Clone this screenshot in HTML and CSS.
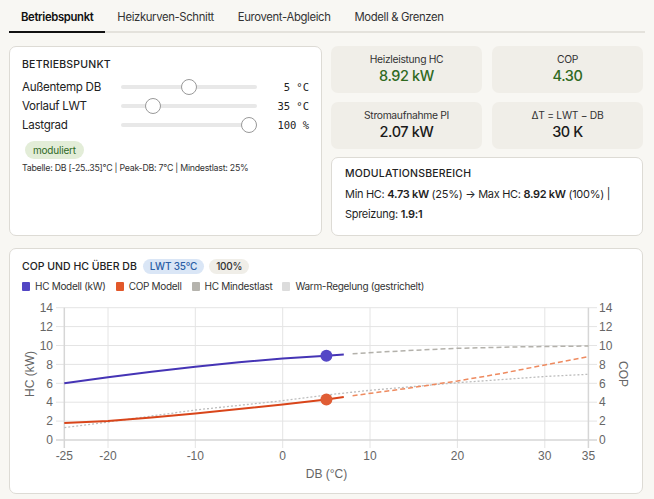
FILE: index.html
```html
<!doctype html>
<html lang="de">
  <head>
    <meta charset="UTF-8" />
    <meta name="viewport" content="width=device-width, initial-scale=1.0" />
    <title>Betriebspunkt</title>
    <link rel="stylesheet" href="styles.css">
  </head>
  <body>
    <div class="app">
      <nav class="tabs">
        <div class="tab active">Betriebspunkt</div>
        <div class="tab">Heizkurven-Schnitt</div>
        <div class="tab">Eurovent-Abgleich</div>
        <div class="tab">Modell &amp; Grenzen</div>
      </nav>

      <div class="top-row">
        <div class="card op-card">
          <div class="card-title">Betriebspunkt</div>
          <div class="slider-row">
            <span class="slider-label">Außentemp DB</span>
            <div class="slider"><span class="thumb" style="left: 68px"></span></div>
            <span class="slider-value">5 °C</span>
          </div>
          <div class="slider-row">
            <span class="slider-label">Vorlauf LWT</span>
            <div class="slider"><span class="thumb" style="left: 32px"></span></div>
            <span class="slider-value">35 °C</span>
          </div>
          <div class="slider-row">
            <span class="slider-label">Lastgrad</span>
            <div class="slider"><span class="thumb" style="left: 128px"></span></div>
            <span class="slider-value">100 %</span>
          </div>
          <div class="pill pill-green">moduliert</div>
          <div class="note">Tabelle: DB [-25..35]°C | Peak-DB: 7°C | Mindestlast: 25%</div>
        </div>

        <div class="right-col">
          <div class="metrics">
            <div class="metric">
              <div class="metric-label">Heizleistung HC</div>
              <div class="metric-value green">8.92 kW</div>
            </div>
            <div class="metric">
              <div class="metric-label">COP</div>
              <div class="metric-value green">4.30</div>
            </div>
            <div class="metric">
              <div class="metric-label">Stromaufnahme PI</div>
              <div class="metric-value">2.07 kW</div>
            </div>
            <div class="metric">
              <div class="metric-label">ΔT = LWT − DB</div>
              <div class="metric-value">30 K</div>
            </div>
          </div>
          <div class="card mod-card">
            <div class="card-title">Modulationsbereich</div>
            <p class="mod-text">Min HC: <b>4.73 kW</b> (25%) → Max HC: <b>8.92 kW</b> (100%) |<br>Spreizung: <b>1.9:1</b></p>
          </div>
        </div>
      </div>

      <div class="card chart-card">
        <div class="chart-head">
          <span class="card-title">COP und HC über DB</span>
          <span class="pill pill-blue">LWT 35°C</span>
          <span class="pill pill-grey">100%</span>
        </div>
        <div class="legend">
          <span class="legend-item"><i class="swatch sw-blue"></i>HC Modell (kW)</span>
          <span class="legend-item"><i class="swatch sw-orange"></i>COP Modell</span>
          <span class="legend-item"><i class="swatch sw-grey"></i>HC Mindestlast</span>
          <span class="legend-item"><i class="swatch sw-light"></i>Warm-Regelung (gestrichelt)</span>
        </div>

        <svg class="chart" width="608" height="186" viewBox="22 296 608 186">
          <!-- grid -->
          <g stroke="#e4e4e4" stroke-width="1">
            <line x1="56" y1="307.7" x2="597" y2="307.7" />
            <line x1="56" y1="326.6" x2="597" y2="326.6" />
            <line x1="56" y1="345.5" x2="597" y2="345.5" />
            <line x1="56" y1="364.4" x2="597" y2="364.4" />
            <line x1="56" y1="383.3" x2="597" y2="383.3" />
            <line x1="56" y1="402.2" x2="597" y2="402.2" />
            <line x1="56" y1="421.1" x2="597" y2="421.1" />
            <line x1="108" y1="307.7" x2="108" y2="448" />
            <line x1="195.3" y1="307.7" x2="195.3" y2="448" />
            <line x1="282.7" y1="307.7" x2="282.7" y2="448" />
            <line x1="370" y1="307.7" x2="370" y2="448" />
            <line x1="457.4" y1="307.7" x2="457.4" y2="448" />
            <line x1="544.8" y1="307.7" x2="544.8" y2="448" />
          </g>
          <g stroke="#d6d6d6" stroke-width="1.5">
            <line x1="56" y1="440" x2="597" y2="440" />
            <line x1="64.3" y1="307.7" x2="64.3" y2="448" />
            <line x1="588.4" y1="307.7" x2="588.4" y2="448" />
          </g>

          <!-- axis labels -->
          <g class="tick" text-anchor="end">
            <text x="53" y="312">14</text>
            <text x="53" y="331">12</text>
            <text x="53" y="350">10</text>
            <text x="53" y="369">8</text>
            <text x="53" y="388">6</text>
            <text x="53" y="406">4</text>
            <text x="53" y="425">2</text>
            <text x="53" y="444">0</text>
          </g>
          <g class="tick" text-anchor="start">
            <text x="599" y="312">14</text>
            <text x="599" y="331">12</text>
            <text x="599" y="350">10</text>
            <text x="599" y="369">8</text>
            <text x="599" y="388">6</text>
            <text x="599" y="406">4</text>
            <text x="599" y="425">2</text>
            <text x="599" y="444">0</text>
          </g>
          <g class="tick" text-anchor="middle">
            <text x="64.3" y="460">-25</text>
            <text x="108" y="460">-20</text>
            <text x="195.3" y="460">-10</text>
            <text x="282.7" y="460">0</text>
            <text x="370" y="460">10</text>
            <text x="457.4" y="460">20</text>
            <text x="544.8" y="460">30</text>
            <text x="588.4" y="460">35</text>
            <text x="326.5" y="478">DB (°C)</text>
          </g>
          <text class="tick" text-anchor="middle" transform="translate(34 374) rotate(-90)">HC (kW)</text>
          <text class="tick" text-anchor="middle" transform="translate(619 374) rotate(90)">COP</text>

          <!-- series -->
          <polyline fill="none" stroke="#bdbdbd" stroke-width="1.3" stroke-dasharray="2 2"
            points="64.3,427.7 108,422 195.3,410 282.7,400.7 326.4,395 370,390.3 457.4,382.7 544.8,376.5 588.4,374.3" />
          <polyline fill="none" stroke="#b3b1ab" stroke-width="1.5" stroke-dasharray="5 3"
            points="352.6,353.7 405,350.7 457.4,348.3 522.9,346.8 588.4,346" />
          <polyline fill="none" stroke="#ee8a5f" stroke-width="1.5" stroke-dasharray="5 3"
            points="352.6,395.7 405,388.7 457.4,381 501.1,373.5 544.8,365 588.4,356.6" />
          <polyline fill="none" stroke="#4534b5" stroke-width="2"
            points="64.3,383.3 108,377.3 151.6,371.8 195.3,366.7 239,362.3 282.7,358.4 326.4,355.7 343.8,354.5" />
          <polyline fill="none" stroke="#d9451a" stroke-width="2"
            points="64.3,423 108,421.1 151.6,417.5 195.3,413.4 239,409 282.7,404.4 326.4,399.4 343.8,397" />
          <circle cx="326.4" cy="355.7" r="6" fill="#5447c6" />
          <circle cx="326.4" cy="399.4" r="6" fill="#e05d35" />
        </svg>
      </div>
    </div>
  </body>
</html>
```

FILE: styles.css
```css
* {
  box-sizing: border-box;
  margin: 0;
  padding: 0;
}

body {
  background-color: #f8f7f3;
  font-family: 'Inter', 'Liberation Sans', sans-serif;
  color: #1f1f1f;
}

.app {
  width: 636px;
  margin-left: 9px;
}

/* tabs */
.tabs {
  display: flex;
  border-bottom: 2px solid #e4e2dc;
  margin-bottom: 13px;
}

.tab {
  padding: 10px 12px 6px;
  font-size: 11.3px;
  line-height: 15px;
  letter-spacing: -0.35px;
  color: #333;
  margin-bottom: -2px;
  border-bottom: 2px solid transparent;
}

.tab.active {
  color: #111;
  font-weight: 600;
  border-bottom-color: #111;
}

/* cards */
.card {
  background-color: #fff;
  border: 1px solid #dddbd5;
  border-radius: 7px;
}

.card-title {
  font-size: 10.5px;
  line-height: 13px;
  font-weight: 500;
  text-transform: uppercase;
  letter-spacing: 0.2px;
  color: #222;
}

.top-row {
  display: grid;
  grid-template-columns: 313px 312px;
  gap: 9px;
  width: 634px;
  height: 190px;
  margin-bottom: 12px;
}

.op-card {
  padding: 11px 12px;
}

.op-card .card-title {
  margin-bottom: 6px;
}

.slider-row {
  display: flex;
  align-items: center;
  height: 19px;
}

.slider-label {
  width: 99px;
  font-size: 11.6px;
  letter-spacing: -0.3px;
  color: #222;
}

.slider {
  position: relative;
  width: 136px;
  height: 4px;
  background-color: #e8e8e8;
  border-radius: 2px;
}

.thumb {
  position: absolute;
  top: -6px;
  width: 16px;
  height: 16px;
  margin-left: -8px;
  border-radius: 50%;
  background-color: #fff;
  border: 1px solid #999;
}

.slider-value {
  flex: 1;
  text-align: right;
  font-family: 'DejaVu Sans Mono', 'Liberation Mono', monospace;
  font-size: 10.5px;
  color: #222;
}

.pill {
  display: inline-block;
  border-radius: 10px;
  font-size: 10px;
  letter-spacing: -0.2px;
}

.pill-green {
  margin: 7px 0 0 3px;
  padding: 3px 8px;
  line-height: 12px;
  background-color: #e3edd8;
  color: #2f6a1f;
}

.note {
  margin-top: 3px;
  font-size: 8.8px;
  letter-spacing: -0.25px;
  color: #333;
}

.right-col {
  display: flex;
  flex-direction: column;
  gap: 8px;
  min-height: 0;
}

.metrics {
  display: grid;
  grid-template-columns: 1fr 1fr;
  gap: 9px 10px;
}

.metric {
  height: 47px;
  background-color: #f0eee8;
  border-radius: 7px;
  text-align: center;
  padding-top: 7px;
}

.metric-label {
  font-size: 10.3px;
  letter-spacing: -0.3px;
  line-height: 13px;
  color: #333;
}

.metric-value {
  font-size: 14.5px;
  font-weight: 500;
  letter-spacing: -0.4px;
  line-height: 20px;
  color: #1a1a1a;
}

.metric-value.green {
  color: #2f6a1f;
}

.mod-card {
  flex: 1;
  min-height: 0;
  padding: 9px 13px;
}

.mod-text {
  margin-top: 4px;
  font-size: 11px;
  line-height: 20px;
  letter-spacing: -0.3px;
  color: #1f1f1f;
}

.mod-text b {
  font-weight: 600;
}

/* chart */
.chart-card {
  width: 634px;
  padding: 10px 12px 11px;
}

.chart-head {
  display: flex;
  align-items: center;
  gap: 5px;
  height: 14px;
}

.chart-head .card-title {
  margin-right: 1px;
  letter-spacing: 0;
}

.pill-blue,
.pill-grey {
  padding: 0 7px;
  line-height: 15px;
  font-weight: 500;
}

.pill-blue {
  background-color: #dae6f6;
  color: #2b5ea6;
}

.pill-grey {
  background-color: #f0eee8;
  color: #333;
}

.legend {
  display: flex;
  gap: 10px;
  margin: 7px 0 4px;
  font-size: 10px;
  line-height: 12px;
  letter-spacing: -0.3px;
  color: #333;
}

.legend-item {
  display: flex;
  align-items: center;
}

.swatch {
  width: 8px;
  height: 9px;
  margin-right: 5px;
  border-radius: 1px;
}

.sw-blue {
  background-color: #5246c4;
}

.sw-orange {
  background-color: #e2582a;
}

.sw-grey {
  background-color: #b5b3ad;
}

.sw-light {
  background-color: #dcdcdc;
}

.chart {
  display: block;
}

.tick {
  font-family: 'Liberation Sans', Arial, sans-serif;
  font-size: 12px;
  fill: #666;
}
```
